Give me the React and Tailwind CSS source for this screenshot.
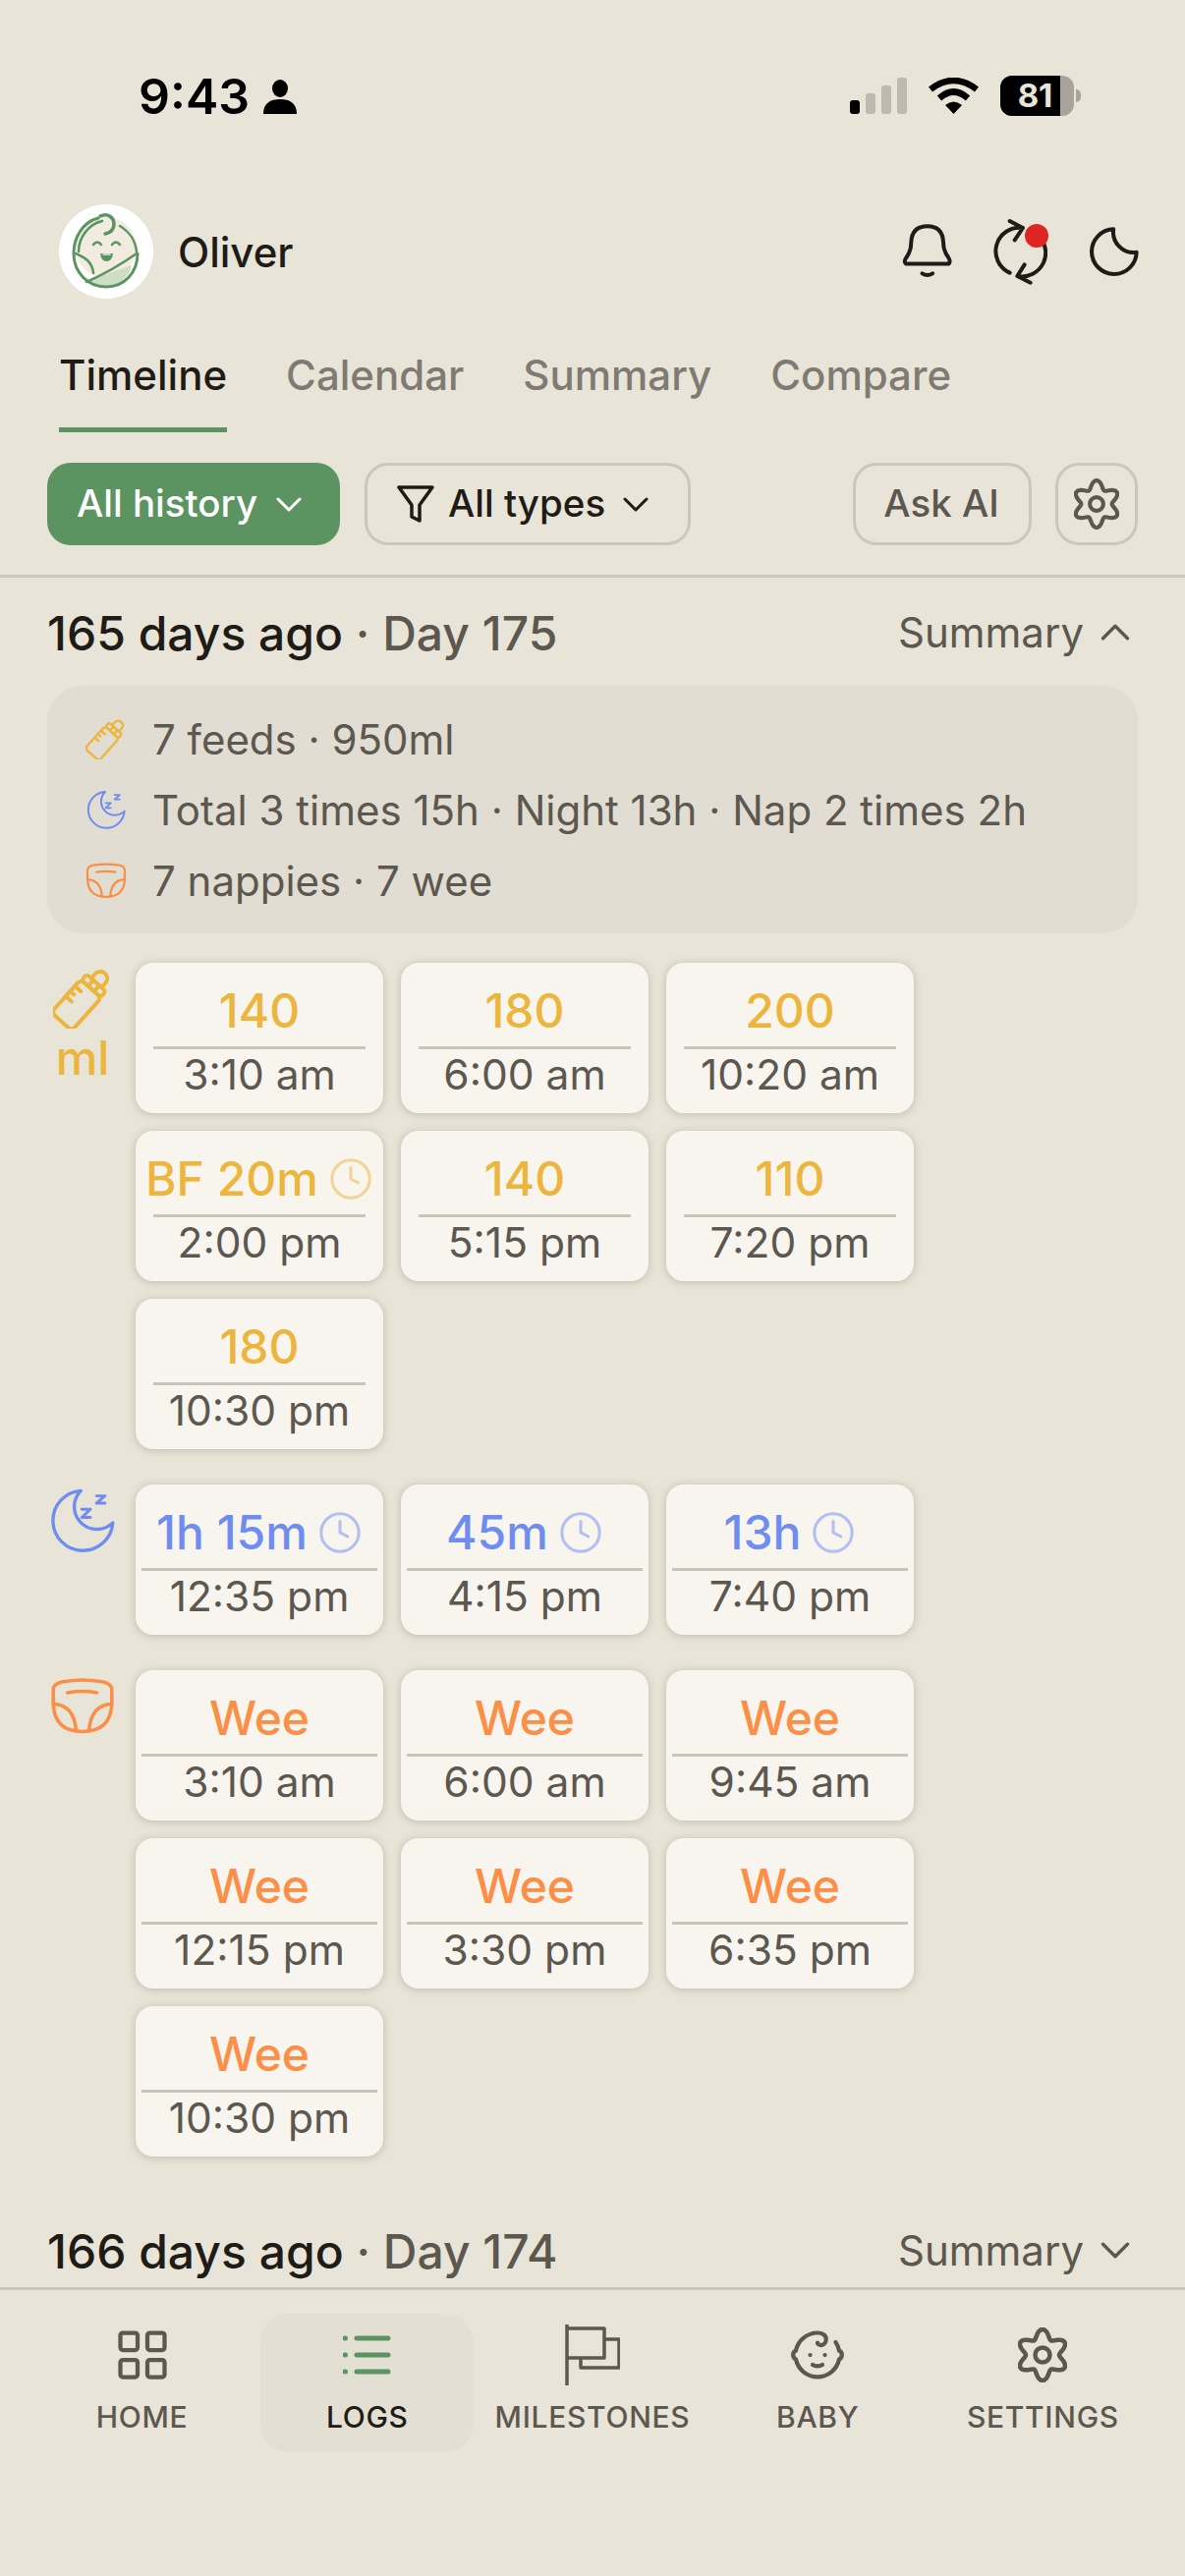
import { Baby, Clock, LayoutGrid } from "lucide-react";

const FEEDS = [
  { value: "140", time: "3:10 am" },
  { value: "180", time: "6:00 am" },
  { value: "200", time: "10:20 am" },
  { value: "BF 20m", time: "2:00 pm", timer: true },
  { value: "140", time: "5:15 pm" },
  { value: "110", time: "7:20 pm" },
  { value: "180", time: "10:30 pm" },
];

const SLEEPS = [
  { value: "1h 15m", time: "12:35 pm", timer: true },
  { value: "45m", time: "4:15 pm", timer: true },
  { value: "13h", time: "7:40 pm", timer: true },
];

const NAPPIES = ["3:10 am", "6:00 am", "9:45 am", "12:15 pm", "3:30 pm", "6:35 pm", "10:30 pm"].map((time) => ({
  value: "Wee",
  time,
}));

// six lobed gear outline
const gearPath = () => {
  const pts = [];
  for (let i = 0; i < 120; i++) {
    const a = (i * 3 * Math.PI) / 180;
    const r = 21.5 + 4.5 * Math.cos(6 * a);
    pts.push(`${(25 + r * Math.sin(a)).toFixed(2)} ${(28 - r * Math.cos(a)).toFixed(2)}`);
  }
  return `M${pts.join("L")}Z`;
};

function Gear({ className }) {
  return (
    <svg viewBox="0 0 50 56" className={className} fill="none" stroke="currentColor" strokeWidth="4.5" strokeLinejoin="round">
      <path d={gearPath()} />
      <circle cx="25" cy="28" r="7.5" />
    </svg>
  );
}

function Chevron({ up, className }) {
  return (
    <svg viewBox="0 0 26 15" className={className} fill="none" stroke="currentColor" strokeWidth="3" strokeLinecap="round" strokeLinejoin="round">
      <path d={up ? "M2 13 13 2l11 11" : "M2 2l11 11L24 2"} />
    </svg>
  );
}

function Bottle({ className, stroke = 4 }) {
  return (
    <svg viewBox="0 0 60 62" className={className} fill="none" stroke="currentColor" strokeWidth={stroke} strokeLinecap="round" strokeLinejoin="round">
      <g transform="rotate(42 30 31)">
        <rect x="16" y="18" width="28" height="45" rx="5" />
        <rect x="17" y="10" width="26" height="8" rx="3" />
        <path d="M23 10V4c0-4 3-7 7-7s7 3 7 7v6" />
        <path d="M16 27h8M16 34h5M16 41h8M26 10v8M34 10v8" />
      </g>
    </svg>
  );
}

function SleepMoon({ className }) {
  return (
    <svg viewBox="60 40 210 205" className={className} fill="none" stroke="currentColor" strokeWidth="10" strokeLinecap="round" strokeLinejoin="round">
      <path d="M160 50A92 92 0 1 0 258 148A68 68 0 0 1 160 50Z" />
      <path d="M163 107h26l-26 25h26M208 66h26l-26 22h26" strokeWidth="9" />
    </svg>
  );
}

function Nappy({ className }) {
  return (
    <svg viewBox="60 615 205 185" className={className} fill="none" stroke="currentColor" strokeWidth="11" strokeLinecap="round" strokeLinejoin="round">
      <path d="M70 655Q72 637 100 632Q162 622 225 632Q253 637 255 655V705Q250 790 162 790Q75 790 70 705Z" />
      <path d="M70 703Q135 705 142 785M255 703Q190 705 183 785M115 667Q162 658 208 667" />
    </svg>
  );
}

function Avatar() {
  return (
    <div className="w-[96px] h-[96px] rounded-full bg-white shrink-0">
      <svg viewBox="0 0 96 96" className="w-full h-full" fill="none" strokeLinecap="round" strokeLinejoin="round">
        <ellipse cx="48" cy="44" rx="31" ry="31" fill="#f1ecdf" />
        <path d="M30 78Q50 70 74 62Q70 80 48 84Q36 84 30 78Z" fill="#cfdcc6" />
        <path d="M40 14C24 18 15 34 15 50C15 70 30 84 48 84C66 84 80 70 80 50" stroke="#5b9461" strokeWidth="3" />
        <path d="M20 48C20 34 30 20 44 17M62 22C72 28 78 38 79 48" stroke="#5b9461" strokeWidth="2.5" />
        <path d="M17 50C26 54 34 58 35 70M79 50C62 62 44 72 28 79" stroke="#5b9461" strokeWidth="2.5" />
        <path d="M42 12C50 8 56 14 56 20C56 26 52 29 47 30" stroke="#5b9461" strokeWidth="3.5" />
        <path d="M35 41Q39 36 43 41M54 41Q58 36 62 41" stroke="#5b9461" strokeWidth="2.5" />
        <path d="M42 50H55Q54 58 48.5 58Q43 58 42 50Z" fill="#5b9461" />
        <path d="M45 51H52" stroke="#f1ecdf" strokeWidth="1.5" />
      </svg>
    </div>
  );
}

function StatusBar() {
  return (
    <div className="h-[208px] shrink-0 flex items-start justify-between pt-[73px] pl-[141px] pr-[106px] text-black">
      <div className="flex items-center gap-[14px]">
        <span className="text-[50px] leading-[50px] font-semibold">9:43</span>
        <svg viewBox="0 0 34 35" className="w-[34px] h-[35px]" fill="currentColor">
          <ellipse cx="17" cy="9" rx="8" ry="9" />
          <path d="M0 35C0 24 7 20 17 20s17 4 17 15Z" />
        </svg>
      </div>
      <div className="flex items-center gap-[22px] pt-[4px]">
        <div className="flex items-end gap-[6px] h-[37px]">
          <span className="w-[10px] h-[14px] rounded-[3px] bg-black" />
          <span className="w-[10px] h-[21px] rounded-[3px] bg-[#bdb9ae]" />
          <span className="w-[10px] h-[29px] rounded-[3px] bg-[#bdb9ae]" />
          <span className="w-[10px] h-[37px] rounded-[3px] bg-[#bdb9ae]" />
        </div>
        <svg viewBox="0 0 51 37" className="w-[51px] h-[37px]" fill="none" stroke="black" strokeWidth="6.5">
          <path d="M2 12Q25.5-6 49 12M11 21Q25.5 8 40 21" />
          <path d="M17 28Q25.5 21 34 28L25.5 37Z" fill="black" stroke="none" />
        </svg>
        <div className="flex items-center">
          <div className="relative w-[75px] h-[41px] rounded-[12px] bg-[#a8a49b] overflow-hidden">
            <div className="h-full w-[61px] bg-black flex items-center justify-center pl-[10px]">
              <span className="text-[33px] leading-[33px] font-bold text-[#e8e4d8]">81</span>
            </div>
          </div>
          <span className="ml-[2px] w-[5px] h-[13px] rounded-r-full bg-[#a8a49b]" />
        </div>
      </div>
    </div>
  );
}

function Header() {
  return (
    <div className="h-[96px] shrink-0 flex items-center justify-between pl-[60px] pr-[47px]">
      <div className="flex items-center gap-[25px]">
        <Avatar />
        <span className="text-[42px] font-medium text-[#1f1b16]">Oliver</span>
      </div>
      <div className="flex items-center gap-[41px] text-[#1f1b16]">
        <svg viewBox="255 500 160 175" className="w-[53px] h-[58px]" fill="none" stroke="currentColor" strokeWidth="12" strokeLinecap="round" strokeLinejoin="round">
          <path d="M270 625H402Q408 618 400 605Q385 585 385 560Q383 510 336 510Q288 510 286 560Q286 585 272 605Q262 618 270 625Z" />
          <path d="M320 655Q336 665 352 655" />
        </svg>
        <div className="relative w-[55px] h-[70px]">
          <svg viewBox="545 485 165 210" className="w-full h-full" fill="none" stroke="currentColor" strokeWidth="12" strokeLinecap="round" strokeLinejoin="round">
            <path d="M595 655A72 72 0 0 1 635 518M595 497l40 21-25 37" />
            <path d="M680 540A72 72 0 0 1 620 665M640 630l-22 35 40 20" />
          </svg>
          <span className="absolute top-[7px] right-[-1px] w-[24px] h-[24px] rounded-full bg-[#e02424]" />
        </div>
        <svg viewBox="835 510 155 155" className="w-[52px] h-[52px]" fill="none" stroke="currentColor" strokeWidth="12" strokeLinecap="round" strokeLinejoin="round">
          <path d="M913 520A68 68 0 1 0 983 590A62 62 0 0 1 913 520Z" />
        </svg>
      </div>
    </div>
  );
}

function Tabs() {
  const tabs = ["Timeline", "Calendar", "Summary", "Compare"];
  return (
    <div className="mt-[26px] h-[110px] shrink-0 flex items-stretch gap-[60px] pl-[60px]">
      {tabs.map((tab, i) => (
        <div
          key={tab}
          className={`flex items-center justify-center text-[42px] pb-[3px] border-b-[5px] font-medium ${
            i === 0 ? "border-[#5b9461] text-[#1f1b16]" : "border-transparent text-[#7f7b74]"
          }`}
        >
          {tab}
        </div>
      ))}
    </div>
  );
}

function Filters() {
  return (
    <div className="mt-[31px] h-[84px] shrink-0 flex items-stretch px-[48px]">
      <button className="w-[298px] rounded-[24px] bg-[#5b9461] text-white text-[38.5px] font-medium flex items-center pl-[30px] gap-[19px]">
        All history
        <Chevron className="w-[26px] h-[15px]" />
      </button>
      <button className="ml-[25px] w-[332px] rounded-[24px] border-[3px] border-[#cbc7be] text-[#1f1b16] text-[38.5px] font-medium flex items-center pl-[30px] gap-[14px]">
        <svg viewBox="0 0 38 38" className="w-[38px] h-[38px]" fill="none" stroke="currentColor" strokeWidth="3.5" strokeLinejoin="round">
          <path d="M2 2H36L23 20V36L15 32V20Z" />
        </svg>
        All types
        <Chevron className="w-[26px] h-[15px] ml-[4px]" />
      </button>
      <button className="ml-auto w-[182px] rounded-[24px] border-[3px] border-[#cbc7be] text-[#5c574f] text-[38.5px] font-medium flex items-center justify-center pr-[2px]">
        Ask AI
      </button>
      <button className="ml-[24px] w-[84px] rounded-[24px] border-[3px] border-[#cbc7be] text-[#5c574f] flex items-center justify-center">
        <Gear className="w-[46px] h-[52px]" />
      </button>
    </div>
  );
}

function DayHeader({ ago, day, open }) {
  return (
    <div className="h-[110px] pt-[4px] flex items-center justify-between px-[48px] shrink-0">
      <div className="text-[48px] font-medium text-[#1f1b16]">
        {ago} days ago <span className="text-[#5c574f]">· Day {day}</span>
      </div>
      <div className="flex items-center gap-[17px] text-[#5c574f] text-[42px] pr-[8px] pb-[3px]">
        Summary
        <Chevron up={open} className="w-[30px] h-[17px]" />
      </div>
    </div>
  );
}

function SummaryPanel() {
  return (
    <div className="mx-[48px] h-[252px] shrink-0 rounded-[36px] bg-[#e1ddd2] flex flex-col justify-center gap-[29px] pl-[39px] text-[42px] leading-[43px] text-[#5c574f]">
      <div className="flex items-center gap-[26px]">
        <Bottle className="w-[42px] h-[42px] text-[#ecb63e]" stroke={3.5} />
        7 feeds · 950ml
      </div>
      <div className="flex items-center gap-[26px]">
        <SleepMoon className="w-[42px] h-[43px] text-[#6f8df0]" />
        Total 3 times 15h · Night 13h · Nap 2 times 2h
      </div>
      <div className="flex items-center gap-[26px]">
        <Nappy className="w-[42px] h-[40px] text-[#fb8f47]" />
        7 nappies · 7 wee
      </div>
    </div>
  );
}

function EntryCard({ item, color, narrow }) {
  return (
    <div className="w-[252px] h-[153px] rounded-[18px] bg-[#f8f5ef] shadow-[0_1px_8px_rgba(90,80,60,0.28)] flex flex-col">
      <div className={`h-[85px] shrink-0 flex items-end justify-center gap-[10px] pb-[12px] text-[48px] leading-[48px] font-medium whitespace-nowrap ${color}`}>
        {item.value}
        {item.timer && <Clock className="w-[46px] h-[46px] mb-[1px] opacity-50" strokeWidth={1.6} />}
      </div>
      <div className={`h-[3px] shrink-0 bg-[#c8c4bb] ${narrow ? "mx-[18px]" : "mx-[6px]"}`} />
      <div className="pt-[5px] text-center text-[42.5px] leading-[42px] text-[#5c574f] whitespace-nowrap">{item.time}</div>
    </div>
  );
}

function Group({ icon, items, color, narrow, className }) {
  return (
    <div className={`flex gap-[18px] px-[48px] shrink-0 ${className}`}>
      <div className="w-[72px] shrink-0 flex flex-col items-center">{icon}</div>
      <div className="grid grid-cols-[repeat(3,252px)] gap-[18px]">
        {items.map((item, i) => (
          <EntryCard key={i} item={item} color={color} narrow={narrow} />
        ))}
      </div>
    </div>
  );
}

function BottomNav() {
  const iconClass = "h-[60px] flex items-center justify-center";
  const items = [
    {
      label: "HOME",
      icon: <LayoutGrid className="w-[60px] h-[60px]" strokeWidth={1.7} />,
    },
    {
      label: "LOGS",
      active: true,
      icon: (
        <svg viewBox="0 0 50 40" className="w-[50px] h-[40px]" fill="none" stroke="#5b9461" strokeWidth="5" strokeLinecap="round">
          <path d="M14 3H46M14 20H46M14 37H46" />
          <path d="M2 3H2.5M2 20H2.5M2 37H2.5" />
        </svg>
      ),
    },
    {
      label: "MILESTONES",
      icon: (
        <svg viewBox="0 0 56 62" className="w-[56px] h-[62px]" fill="none" stroke="currentColor" strokeWidth="3.5" strokeLinejoin="round">
          <path d="M2 0V62M2 4H40V34H2M40 15H55V44H16V34" />
        </svg>
      ),
    },
    {
      label: "BABY",
      icon: <Baby className="w-[60px] h-[60px]" strokeWidth={1.7} />,
    },
    {
      label: "SETTINGS",
      icon: <Gear className="w-[50px] h-[56px]" />,
    },
  ];
  return (
    <div className="h-[294px] shrink-0 border-t-[3px] border-[#cbc7be] px-[30px] pt-[24px]">
      <div className="grid grid-cols-5">
        {items.map((item) => (
          <div
            key={item.label}
            className={`h-[141px] flex flex-col items-center pt-[12px] gap-[15px] rounded-[30px] text-[30px] leading-[36px] font-medium tracking-[0.7px] ${
              item.active ? "w-[217px] justify-self-center bg-[#e4dfd3] text-[#1f1b16]" : "text-[#5c574f]"
            }`}
          >
            <div className={iconClass}>{item.icon}</div>
            {item.label}
          </div>
        ))}
      </div>
    </div>
  );
}

export default function App() {
  return (
    <div className="w-[1206px] h-[2622px] flex flex-col overflow-hidden bg-[#e8e4d8] font-[Inter,sans-serif]">
      <StatusBar />
      <Header />
      <Tabs />
      <Filters />
      <div className="mt-[30px] h-[3px] shrink-0 bg-[#cbc7be]" />
      <div className="flex-1 min-h-0 overflow-hidden flex flex-col">
        <DayHeader ago={165} day={175} open />
        <SummaryPanel />
        <Group
          className="mt-[30px]"
          color="text-[#ecb63e]"
          narrow
          items={FEEDS}
          icon={
            <>
              <Bottle className="w-[60px] h-[62px] mt-[5px] text-[#ecb63e]" />
              <span className="text-[48px] leading-[48px] mt-[6px] font-medium text-[#ecb63e]">ml</span>
            </>
          }
        />
        <Group
          className="mt-[36px]"
          color="text-[#6f8df0]"
          items={SLEEPS}
          icon={<SleepMoon className="w-[70px] h-[68px] mt-[3px] text-[#6f8df0]" />}
        />
        <Group
          className="mt-[36px]"
          color="text-[#fb8f47]"
          items={NAPPIES}
          icon={<Nappy className="w-[66px] h-[60px] mt-[6px] text-[#fb8f47]" />}
        />
        <div className="mt-[40px] shrink-0">
          <DayHeader ago={166} day={174} />
        </div>
      </div>
      <BottomNav />
    </div>
  );
}
